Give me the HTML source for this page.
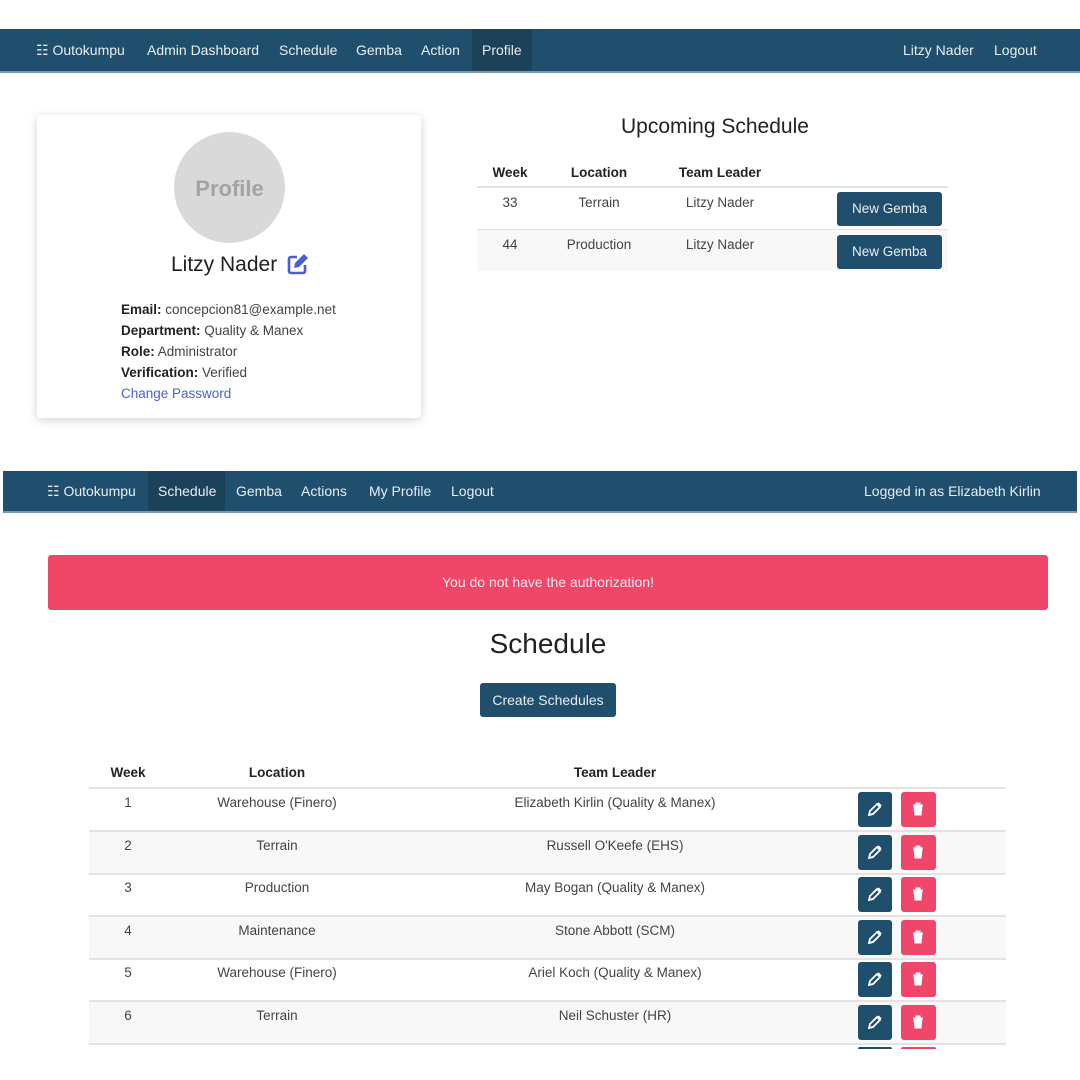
<!DOCTYPE html>
<html><head><meta charset="utf-8"><style>
*{margin:0;padding:0;box-sizing:border-box}
body{width:1080px;height:1080px;background:#fff;position:relative;overflow:hidden;font-family:"Liberation Sans",sans-serif;color:#333}
.a{position:absolute;white-space:nowrap}
.nav{position:absolute;background:#1f4f6c;border-bottom:2px solid #7d98aa}
.nt{position:absolute;color:#e6eef3;font-size:14px;top:0;line-height:42px}
.c{position:absolute;width:240px;text-align:center;font-size:13.5px;color:#444;white-space:nowrap}
.h{font-weight:bold;color:#222}
.row{position:absolute;left:89px;width:917px;border-top:2px solid #e3e3e3}
.eb{position:absolute;width:34px;height:35px;border-radius:3px;background:#1f4f6c}
.db{position:absolute;width:35px;height:35px;border-radius:3px;background:#f0466a}
.eb svg,.db svg{position:absolute;left:10px;top:10px}
.gb{position:absolute;left:837px;width:105px;height:34px;background:#1f4f6c;border-radius:3px;color:#e8eef2;font-size:13.5px;text-align:center;line-height:34px}
</style></head><body>

<div class="nav" style="left:0;top:29px;width:1080px;height:44px">
  <div style="position:absolute;left:472px;top:0;width:60px;height:42px;background:#1b4259"></div>
  <div class="nt" style="left:36px">☷ Outokumpu</div>
  <div class="nt" style="left:147px">Admin Dashboard</div>
  <div class="nt" style="left:279px">Schedule</div>
  <div class="nt" style="left:356px">Gemba</div>
  <div class="nt" style="left:421px">Action</div>
  <div class="nt" style="left:482px">Profile</div>
  <div class="nt" style="left:903px">Litzy Nader</div>
  <div class="nt" style="left:994px">Logout</div>
</div>

<div class="a" style="left:37px;top:115px;width:384px;height:303px;border-radius:4px;box-shadow:0 2px 10px rgba(0,0,0,.18)"></div>
<div class="a" style="left:174px;top:132px;width:111px;height:111px;border-radius:50%;background:#d9d9d9;text-align:center;line-height:113px;font-size:22px;font-weight:bold;color:#a3a3a3">Profile</div>
<div class="a" style="left:171px;top:253px;font-size:21px;color:#222">Litzy Nader</div>
<svg class="a" style="left:287px;top:253px" width="22" height="22" viewBox="0 0 22 22"><path d="M10 4H4a2 2 0 0 0-2 2v12a2 2 0 0 0 2 2h12a2 2 0 0 0 2-2v-6" fill="none" stroke="#4a5fd6" stroke-width="2.6"/><path d="M17 1l4 4-9 9-5 1 1-5z" fill="#4a5fd6"/></svg>
<div class="a" style="left:121px;top:299px;font-size:13.5px;line-height:21px;color:#444">
<b style="color:#222">Email:</b> concepcion81@example.net<br>
<b style="color:#222">Department:</b> Quality &amp; Manex<br>
<b style="color:#222">Role:</b> Administrator<br>
<b style="color:#222">Verification:</b> Verified<br>
<span style="color:#4a63d6">Change Password</span></div>

<div class="a" style="left:621px;top:115px;font-size:21px;color:#222">Upcoming Schedule</div>
<div class="c h" style="left:390px;top:165px">Week</div>
<div class="c h" style="left:479px;top:165px">Location</div>
<div class="c h" style="left:600px;top:165px">Team Leader</div>
<div class="a" style="left:477px;top:186px;width:471px;height:2px;background:#e3e3e3"></div>
<div class="a" style="left:477px;top:229px;width:471px;height:42px;background:#f8f8f8;border-top:1px solid #e3e3e3"></div>
<div class="c" style="left:390px;top:195px">33</div>
<div class="c" style="left:479px;top:195px">Terrain</div>
<div class="c" style="left:600px;top:195px">Litzy Nader</div>
<div class="gb" style="top:192px">New Gemba</div>
<div class="c" style="left:390px;top:237px">44</div>
<div class="c" style="left:479px;top:237px">Production</div>
<div class="c" style="left:600px;top:237px">Litzy Nader</div>
<div class="gb" style="top:235px">New Gemba</div>

<div class="nav" style="left:3px;top:471px;width:1074px;height:42px">
  <div style="position:absolute;left:145px;top:0;width:77px;height:40px;background:#1b4259"></div>
  <div class="nt" style="left:44px;line-height:40px">☷ Outokumpu</div>
  <div class="nt" style="left:155px;line-height:40px">Schedule</div>
  <div class="nt" style="left:233px;line-height:40px">Gemba</div>
  <div class="nt" style="left:298px;line-height:40px">Actions</div>
  <div class="nt" style="left:366px;line-height:40px">My Profile</div>
  <div class="nt" style="left:448px;line-height:40px">Logout</div>
  <div class="nt" style="left:861px;line-height:40px">Logged in as Elizabeth Kirlin</div>
</div>

<div class="a" style="left:48px;top:555px;width:1000px;height:55px;background:#f0466a;border-radius:3px;color:#fde8ec;font-size:14px;text-align:center;line-height:55px">You do not have the authorization!</div>
<div class="a" style="left:448px;top:628px;width:200px;text-align:center;font-size:28px;color:#222">Schedule</div>
<div class="a" style="left:480px;top:683px;width:136px;height:34px;background:#1f4f6c;border-radius:3px;color:#e8eef2;font-size:14px;text-align:center;line-height:34px">Create Schedules</div>

<div class="c h" style="left:8px;top:765px">Week</div>
<div class="c h" style="left:157px;top:765px">Location</div>
<div class="c h" style="left:495px;top:765px">Team Leader</div>

<div class="row" style="top:787px;height:43px"></div>
<div class="row" style="top:830px;height:43px;background:#f8f8f8"></div>
<div class="row" style="top:873px;height:42px"></div>
<div class="row" style="top:915px;height:43px;background:#f8f8f8"></div>
<div class="row" style="top:958px;height:42px"></div>
<div class="row" style="top:1000px;height:43px;background:#f8f8f8"></div>
<div class="row" style="top:1043px;height:6px"></div>

<div class="c" style="left:8px;top:795px">1</div><div class="c" style="left:157px;top:795px">Warehouse (Finero)</div><div class="c" style="left:495px;top:795px">Elizabeth Kirlin (Quality &amp; Manex)</div>
<div class="c" style="left:8px;top:838px">2</div><div class="c" style="left:157px;top:838px">Terrain</div><div class="c" style="left:495px;top:838px">Russell O'Keefe (EHS)</div>
<div class="c" style="left:8px;top:880px">3</div><div class="c" style="left:157px;top:880px">Production</div><div class="c" style="left:495px;top:880px">May Bogan (Quality &amp; Manex)</div>
<div class="c" style="left:8px;top:923px">4</div><div class="c" style="left:157px;top:923px">Maintenance</div><div class="c" style="left:495px;top:923px">Stone Abbott (SCM)</div>
<div class="c" style="left:8px;top:965px">5</div><div class="c" style="left:157px;top:965px">Warehouse (Finero)</div><div class="c" style="left:495px;top:965px">Ariel Koch (Quality &amp; Manex)</div>
<div class="c" style="left:8px;top:1008px">6</div><div class="c" style="left:157px;top:1008px">Terrain</div><div class="c" style="left:495px;top:1008px">Neil Schuster (HR)</div>

<div class="eb" style="left:858px;top:792px"><svg width="14" height="14" viewBox="0 0 14 14"><path d="M1 13l1-4 7-7 3 3-7 7z M10 1l3 3" fill="none" stroke="#fff" stroke-width="1.8"/></svg></div>
<div class="db" style="left:901px;top:792px"><svg width="14" height="14" viewBox="0 0 14 14"><path d="M2 3h10M5 3V1h4v2M3 4h8l-1 9H4z" fill="#fff" stroke="#fff" stroke-width="1"/></svg></div>
<div class="eb" style="left:858px;top:835px"><svg width="14" height="14" viewBox="0 0 14 14"><path d="M1 13l1-4 7-7 3 3-7 7z M10 1l3 3" fill="none" stroke="#fff" stroke-width="1.8"/></svg></div>
<div class="db" style="left:901px;top:835px"><svg width="14" height="14" viewBox="0 0 14 14"><path d="M2 3h10M5 3V1h4v2M3 4h8l-1 9H4z" fill="#fff" stroke="#fff" stroke-width="1"/></svg></div>
<div class="eb" style="left:858px;top:877px"><svg width="14" height="14" viewBox="0 0 14 14"><path d="M1 13l1-4 7-7 3 3-7 7z M10 1l3 3" fill="none" stroke="#fff" stroke-width="1.8"/></svg></div>
<div class="db" style="left:901px;top:877px"><svg width="14" height="14" viewBox="0 0 14 14"><path d="M2 3h10M5 3V1h4v2M3 4h8l-1 9H4z" fill="#fff" stroke="#fff" stroke-width="1"/></svg></div>
<div class="eb" style="left:858px;top:920px"><svg width="14" height="14" viewBox="0 0 14 14"><path d="M1 13l1-4 7-7 3 3-7 7z M10 1l3 3" fill="none" stroke="#fff" stroke-width="1.8"/></svg></div>
<div class="db" style="left:901px;top:920px"><svg width="14" height="14" viewBox="0 0 14 14"><path d="M2 3h10M5 3V1h4v2M3 4h8l-1 9H4z" fill="#fff" stroke="#fff" stroke-width="1"/></svg></div>
<div class="eb" style="left:858px;top:962px"><svg width="14" height="14" viewBox="0 0 14 14"><path d="M1 13l1-4 7-7 3 3-7 7z M10 1l3 3" fill="none" stroke="#fff" stroke-width="1.8"/></svg></div>
<div class="db" style="left:901px;top:962px"><svg width="14" height="14" viewBox="0 0 14 14"><path d="M2 3h10M5 3V1h4v2M3 4h8l-1 9H4z" fill="#fff" stroke="#fff" stroke-width="1"/></svg></div>
<div class="eb" style="left:858px;top:1005px"><svg width="14" height="14" viewBox="0 0 14 14"><path d="M1 13l1-4 7-7 3 3-7 7z M10 1l3 3" fill="none" stroke="#fff" stroke-width="1.8"/></svg></div>
<div class="db" style="left:901px;top:1005px"><svg width="14" height="14" viewBox="0 0 14 14"><path d="M2 3h10M5 3V1h4v2M3 4h8l-1 9H4z" fill="#fff" stroke="#fff" stroke-width="1"/></svg></div>
<div class="eb" style="left:858px;top:1047px;height:2px;border-radius:3px 3px 0 0"></div>
<div class="db" style="left:901px;top:1047px;height:2px;border-radius:3px 3px 0 0"></div>
</body></html>
